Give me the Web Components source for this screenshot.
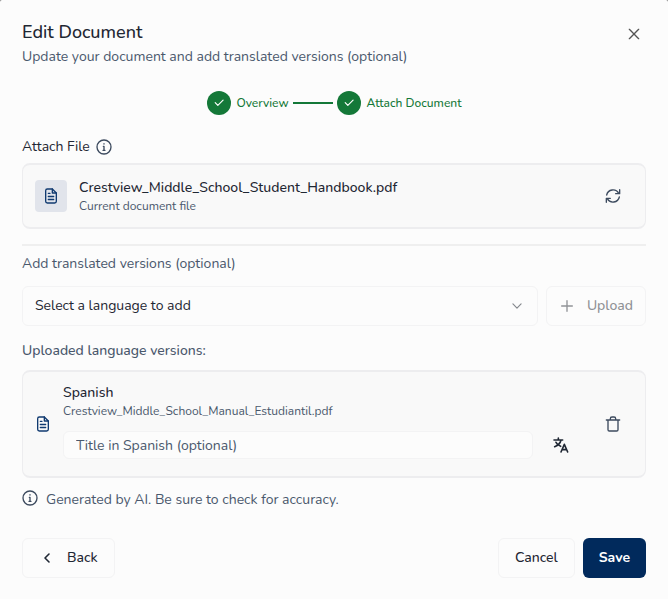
<!DOCTYPE html>
<html lang="en">
<head>
<meta charset="utf-8">
<meta name="viewport" content="width=device-width, initial-scale=1">
<title>Edit Document</title>
<style>
  :root {
    --ink: #1f2733;
    --muted: #4a586c;
    --navy: #012a5c;
    --green: #147838;
    --surface: #fcfcfc;
    --card: #f9f9f9;
    --line: #ededef;
    --faint: #f3f3f4;
    --text: 14px;
    --small: 12px;
  }
  body {
    margin: 0;
    background: #777;
    color: var(--ink);
    font: var(--text)/20px Nunito, Lato, "Open Sans", sans-serif;
  }
</style>
</head>
<body>
<edit-dialog></edit-dialog>

<script>
////////////////////
// Icons
////////////////////
const icons = {
  close: `<path d="M5 5l14 14M19 5L5 19"/>`,
  check: `<path d="M19 7l-9 9-4.500-4.500"/>`,
  info: `<circle cx="12" cy="12" r="10.5"/><path d="M11 11h1v6M10.5 17h3M12 7v.5"/>`,
  file: `<path d="M14 1.500H6.500a2.500 2.500 0 0 0-2.500 2.500v16a2.500 2.500 0 0 0 2.500 2.500h11a2.500 2.500 0 0 0 2.500-2.500V7.500z"/><path d="M14 1.500V7.500H20M8 8h2.500M8 12.750h8M8 17.250h8"/>`,
  sync: `<path d="M2.500 10.500A9.700 9.700 0 0 1 20.500 8M22 2.500V8.500H16M21.500 13.500A9.700 9.700 0 0 1 3.500 16M2 21.500V15.500H8"/>`,
  down: `<path d="M5 8.500l7 7 7-7"/>`,
  plus: `<path d="M12 4v16M4 12h16"/>`,
  left: `<path d="M15 6l-6 6 6 6"/>`,
  trash: `<path d="M2 6h20M4.500 6v14.500a2 2 0 0 0 2 2h11a2 2 0 0 0 2-2V6M8 6V4a2.500 2.500 0 0 1 2.500-2.500h3A2.500 2.500 0 0 1 16 4v2"/>`,
  translate: `<path d="M1.500 4.500h13M8 1.500v3M4.500 8c1.500 3 4 5 7 6M12 4.500C11 9.500 7.500 12.500 2.500 14.500M12 22.500L17 11l5 11.500M13.500 19h7"/>`
};

////////////////////
// Helper
////////////////////
const make = (name, markup) => {
  customElements.define(name, class extends HTMLElement {
    constructor() {
      super();
      this.attachShadow({ mode: "open" });
      const props = Object.fromEntries([...this.attributes].map((a) => [a.name, a.value]));
      this.shadowRoot.innerHTML = markup(props);
    }
  });
};

make("ui-icon", ({ name, size = 16, weight = 2 }) => `
  <style>
    :host { display: block; flex: none; }
    svg { display: block; fill: none; stroke: currentColor; stroke-linecap: round; stroke-linejoin: round; }
  </style>
  <svg width="${size}" height="${size}" viewBox="0 0 24 24" stroke-width="${weight}" aria-hidden="true">${icons[name]}</svg>
`);

// variant: outline (default), compact, primary or icon
make("ui-button", ({ variant = "outline", label = "", disabled }) => `
  <style>
    :host { display: block; flex: none; }
    button {
      display: flex; align-items: center; justify-content: center; gap: 12px;
      height: 40px; padding: 0 16px; box-sizing: border-box;
      border: 1px solid var(--faint); border-radius: 6px;
      background: var(--surface); color: inherit; font: inherit; font-weight: 500; cursor: pointer;
    }
    button:disabled { color: #909296; cursor: default; }
    .compact { padding: 0 12px; }
    .primary { padding: 0 16px; border: 0; background: var(--navy); color: #fff; font-weight: 700; }
    .icon { width: 40px; padding: 0; border: 0; background: none; }
  </style>
  <button type="button" class="${variant}" ${label ? `aria-label="${label}"` : ""} ${disabled !== undefined ? "disabled" : ""}><slot></slot></button>
`);

make("ui-step", () => `
  <style>
    :host { display: flex; align-items: center; gap: 6px; color: var(--green); font-size: var(--small); font-weight: 500; }
    span {
      display: grid; place-items: center; width: 24px; height: 24px;
      border-radius: 50%; background: var(--green); color: #fff;
    }
  </style>
  <span><ui-icon name="check" size="14"></ui-icon></span><slot></slot>
`);

make("ui-card", () => `
  <style>
    :host {
      display: flex; align-items: center; gap: 12px; padding: 11px 12px;
      border: solid var(--line); border-width: 2px 1px; border-radius: 8px;
      background: var(--card);
    }
  </style>
  <slot></slot>
`);

make("ui-select", ({ label }) => `
  <style>
    :host { display: grid; align-items: center; flex: 1; min-width: 0; }
    select, ui-icon { grid-area: 1 / 1; }
    select {
      appearance: none; width: 100%; height: 40px; padding: 0 40px 0 12px; box-sizing: border-box;
      border: 1px solid var(--faint); border-radius: 6px;
      background: var(--surface); color: inherit; font: inherit;
    }
    ui-icon { justify-self: end; margin-right: 14px; color: #85888d; pointer-events: none; }
  </style>
  <select aria-label="${label}"><option>${label}</option><option>French</option><option>Arabic</option></select>
  <ui-icon name="down" size="14"></ui-icon>
`);

make("ui-input", ({ label }) => `
  <style>
    :host { display: block; flex: 1; min-width: 0; }
    input {
      display: block; width: 100%; height: 28px; padding: 0 12px; box-sizing: border-box;
      border: 1px solid var(--faint); border-radius: 6px;
      background: var(--surface); color: inherit; font: inherit;
    }
    input::placeholder { color: var(--muted); opacity: 1; }
  </style>
  <input type="text" aria-label="${label}" placeholder="${label}">
`);

////////////////////
// Dialog
////////////////////
make("edit-dialog", () => `
  <style>
    :host { display: block; }
    main { min-height: 100vh; box-sizing: border-box; padding: 22px 22px 20px; border-radius: 2px 2px 0 0; background: var(--surface); }
    h1, h2, p { margin: 0; font-size: inherit; font-weight: inherit; }
    header { display: flex; justify-content: space-between; align-items: flex-start; margin-bottom: 24px; }
    h1 { font-size: 18px; font-weight: 500; margin-bottom: 5px; }
    header ui-button { margin: -8px -8px -16px 0; color: #555; }
    .muted, .small { color: var(--muted); }
    .small { font-size: var(--small); line-height: 16px; }
    .medium { font-weight: 500; }
    .steps { display: flex; justify-content: center; align-items: center; gap: 4px; margin-bottom: 22px; }
    .bar { width: 40px; height: 2px; background: var(--green); }
    .label { display: flex; align-items: center; gap: 6px; margin-bottom: 6px; }
    .label ui-icon, .note ui-icon, .tool { color: #3c4a5e; }
    .grow { flex: 1; min-width: 0; }
    .badge { display: grid; place-items: center; width: 32px; height: 32px; border-radius: 4px; background: #e1e4eb; }
    .doc { color: #103a70; }
    hr { height: 2px; margin: 15px 0 8px; border: 0; background: #efefef; }
    .row { display: flex; align-items: center; gap: 8px; }
    .add { margin: 12px 0 15px; }
    ui-card { margin-top: 9px; }
    .label + ui-card { margin-top: 0; }
    .title { margin-top: 6px; }
    .note { align-items: flex-start; margin: 12px 0 28px; }
    .spread { flex: 1; }
  </style>
  <main role="dialog" aria-labelledby="heading">
    <header>
      <div>
        <h1 id="heading">Edit Document</h1>
        <p class="muted">Update your document and add translated versions (optional)</p>
      </div>
      <ui-button variant="icon" label="Close"><ui-icon name="close"></ui-icon></ui-button>
    </header>
    <div class="steps">
      <ui-step>Overview</ui-step>
      <div class="bar"></div>
      <ui-step>Attach Document</ui-step>
    </div>
    <h2 class="label">Attach File <ui-icon name="info"></ui-icon></h2>
    <ui-card>
      <div class="badge doc"><ui-icon name="file"></ui-icon></div>
      <div class="grow">
        <p class="medium">Crestview_Middle_School_Student_Handbook.pdf</p>
        <p class="small">Current document file</p>
      </div>
      <ui-button class="tool" variant="icon" label="Replace file"><ui-icon name="sync"></ui-icon></ui-button>
    </ui-card>
    <hr>
    <h2 class="muted">Add translated versions (optional)</h2>
    <div class="row add">
      <ui-select label="Select a language to add"></ui-select>
      <ui-button variant="compact" disabled><ui-icon name="plus"></ui-icon>Upload</ui-button>
    </div>
    <h2 class="muted medium">Uploaded language versions:</h2>
    <ui-card>
      <ui-icon class="doc" name="file"></ui-icon>
      <div class="grow">
        <p class="medium">Spanish</p>
        <p class="small">Crestview_Middle_School_Manual_Estudiantil.pdf</p>
        <div class="row title">
          <ui-input label="Title in Spanish (optional)"></ui-input>
          <ui-button variant="icon" label="Translate title"><ui-icon name="translate" weight="2.4"></ui-icon></ui-button>
        </div>
      </div>
      <ui-button class="tool" variant="icon" label="Delete Spanish version"><ui-icon name="trash"></ui-icon></ui-button>
    </ui-card>
    <p class="row note muted"><ui-icon name="info"></ui-icon>Generated by AI. Be sure to check for accuracy.</p>
    <div class="row">
      <ui-button><ui-icon name="left" weight="2.4"></ui-icon>Back</ui-button>
      <div class="spread"></div>
      <ui-button>Cancel</ui-button>
      <ui-button variant="primary">Save</ui-button>
    </div>
  </main>
`);
</script>
</body>
</html>
